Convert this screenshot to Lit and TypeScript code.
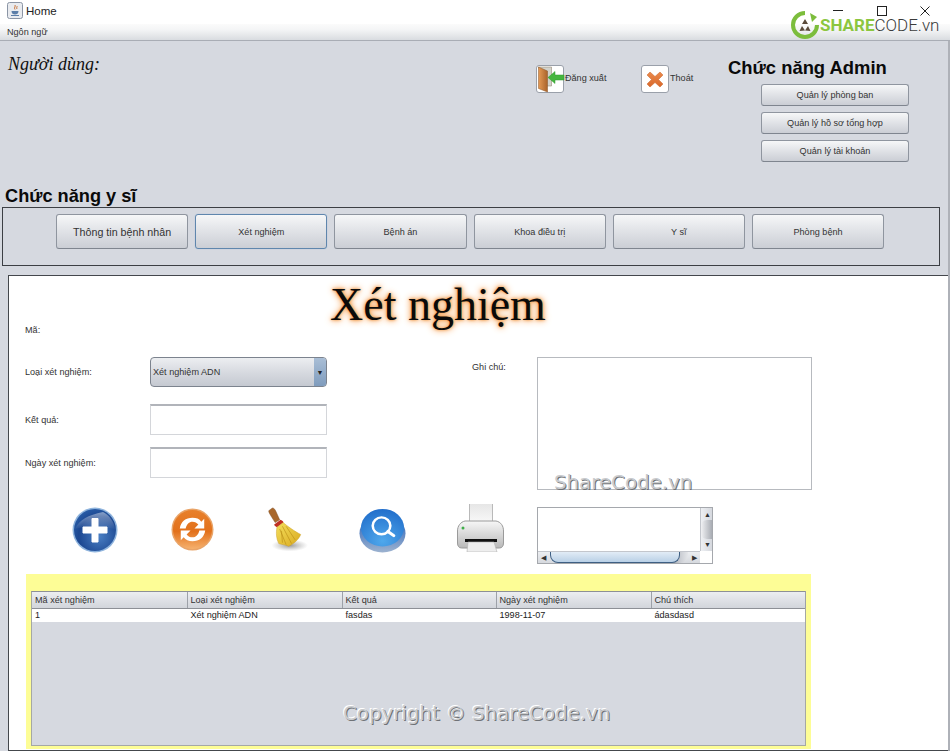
import { css, html, LitElement, svg } from "lit";
import { customElement } from "lit/decorators.js";

const doctorTabs = ["Thông tin bệnh nhân", "Xét nghiệm", "Bệnh án", "Khoa điều trị", "Y sĩ", "Phòng bệnh"];
const adminButtons = ["Quản lý phòng ban", "Quản lý hồ sơ tổng hợp", "Quản lý tài khoản"];
const columns = ["Mã xét nghiệm", "Loại xét nghiệm", "Kết quả", "Ngày xét nghiệm", "Chú thích"];
const rows = [["1", "Xét nghiệm ADN", "fasdas", "1998-11-07", "ádasdasd"]];

const javaIcon = svg`<svg width="16" height="17" viewBox="0 0 16 17">
  <rect x=".5" y=".5" width="15" height="16" rx="2" fill="#e9ebef" stroke="#8b95a5"/>
  <path d="M8 3c1 1.500-1.500 2.500 0 4.500M10 4c.5 1-1 1.500 0 3" fill="none" stroke="#c9743a"/>
  <path d="M4.500 9h7c0 2.500-1.500 3.500-3.500 3.500S4.500 11.500 4.500 9z" fill="#5c7ea8"/>
  <path d="M4 13.500h8" stroke="#5c7ea8"/>
</svg>`;

const doorIcon = svg`<svg width="28" height="26" viewBox="0 0 28 26">
  <defs><linearGradient id="door" x1="0" x2="1"><stop offset="0" stop-color="#e59a55"/><stop offset="1" stop-color="#a9632b"/></linearGradient></defs>
  <path d="M1.500 1h13v19H8z" fill="#d2d2cc" stroke="#8a7b63" stroke-width=".5"/>
  <path d="M1.500 1l9 4v21l-9-3.500z" fill="url(#door)" stroke="#8a5426" stroke-width=".5"/>
  <path d="M11 11.500l7-6v3.500h9v5h-9v3.500z" fill="#46b53f" stroke="#2f9a2c" stroke-width=".5"/>
</svg>`;

const exitIcon = svg`<svg width="26" height="26" viewBox="0 0 26 26">
  <defs><linearGradient id="cross" x1="0" y1="0" x2="0" y2="1"><stop offset="0" stop-color="#ea8a4c"/><stop offset="1" stop-color="#d9682b"/></linearGradient></defs>
  <path d="M5 9l3-3 5 4.500L18 6l3 3-4.500 4.500L21 18l-3 3-5-4.500L8 21l-3-3 4.500-4.500z" fill="url(#cross)" stroke="#c9642b" stroke-width=".5"/>
</svg>`;

const addIcon = svg`<svg width="46" height="46" viewBox="0 0 46 46">
  <defs>
    <radialGradient id="addFill" cx=".6" cy=".65" r=".75"><stop offset="0" stop-color="#4a7fc4"/><stop offset=".65" stop-color="#1c4791"/><stop offset="1" stop-color="#2b62ad"/></radialGradient>
    <linearGradient id="addGloss" x1="0" y1="0" x2="0" y2="1"><stop offset="0" stop-color="#fff" stop-opacity=".45"/><stop offset="1" stop-color="#fff" stop-opacity=".02"/></linearGradient>
  </defs>
  <circle cx="23" cy="23" r="22.500" fill="#8fb4dd"/>
  <circle cx="23" cy="23" r="21" fill="url(#addFill)"/>
  <path d="M3 22C7 13 16 8 31 5c6 3 11 9 12 17-10-2-28-4-40 0z" fill="url(#addGloss)"/>
  <path d="M20 11.500h6V20h9v6h-9v9h-6v-9h-9v-6h9z" fill="#fff" stroke="#fff" stroke-width="1" stroke-linejoin="round"/>
</svg>`;

const refreshIcon = svg`<svg width="43" height="43" viewBox="0 0 44 44">
  <defs><linearGradient id="refFill" x1="0" y1="0" x2="0" y2="1"><stop offset="0" stop-color="#e8802b"/><stop offset=".55" stop-color="#e2711c"/><stop offset="1" stop-color="#f6b16e"/></linearGradient></defs>
  <circle cx="22" cy="22" r="21.500" fill="#e9a468"/>
  <circle cx="22" cy="22" r="20" fill="url(#refFill)"/>
  <path d="M9 21c1-7 6-11 13-11 4 0 7 1 9 4l3-3v10H24l4-4c-1.500-2-3.500-3-6-3-3.500 0-6 2.500-7 7z" fill="#fff"/>
  <path d="M35 23c-1 7-6 11-13 11-4 0-7-1-9-4l-3 3V23h10l-4 4c1.500 2 3.500 3 6 3 3.500 0 6-2.500 7-7z" fill="#fff"/>
</svg>`;

const broomIcon = svg`<svg width="42" height="46" viewBox="0 0 46 50">
  <defs>
    <radialGradient id="broomShadow"><stop offset="0" stop-color="#777" stop-opacity=".75"/><stop offset="1" stop-color="#999" stop-opacity="0"/></radialGradient>
    <linearGradient id="straw" x1="0" y1="0" x2="1" y2="1"><stop offset="0" stop-color="#f4df5c"/><stop offset="1" stop-color="#d9a91f"/></linearGradient>
  </defs>
  <ellipse cx="26" cy="43" rx="20" ry="6.500" fill="url(#broomShadow)"/>
  <path d="M3 5l4-3c2 0 3 2 4 4l4 9-5 3-5-8C4 8 3 7 3 5z" fill="#a9682c" stroke="#7a4a1f" stroke-width=".5"/>
  <path d="M9 20l7-5c2 1 3 2 3 3l-7 5c-2-1-3-2-3-3z" fill="#bf2f22"/>
  <path d="M12 23l7-5c3 3 13 10 19 13-2 5-6 9-13 13-4-2-9-2-11-3-3-6-3-12-2-18z" fill="url(#straw)" stroke="#c99c1c" stroke-width=".5"/>
  <path d="M15 25l7 17M18 22l10 19M22 22l10 15M17 27l1 13" stroke="#b98d16" stroke-width=".7" fill="none"/>
</svg>`;

const searchIcon = svg`<svg width="47" height="45" viewBox="0 0 48 48" preserveAspectRatio="none">
  <defs>
    <linearGradient id="sBase" x1="0" y1="0" x2="0" y2="1"><stop offset="0" stop-color="#1b57b4"/><stop offset="1" stop-color="#9db3d0"/></linearGradient>
    <radialGradient id="sTop" cx=".5" cy=".85" r=".9"><stop offset="0" stop-color="#4fa8ec"/><stop offset="1" stop-color="#1f6bc9"/></radialGradient>
  </defs>
  <ellipse cx="24" cy="27" rx="23.500" ry="20.500" fill="url(#sBase)"/>
  <ellipse cx="24" cy="21" rx="22" ry="20" fill="url(#sTop)"/>
  <circle cx="23" cy="19" r="9" fill="none" stroke="#fff" stroke-width="2.600"/>
  <path d="M29.500 25l6 4.500" stroke="#fff" stroke-width="3.200" stroke-linecap="round"/>
</svg>`;

const printerIcon = svg`<svg width="47" height="48" viewBox="0 0 47 48">
  <defs>
    <linearGradient id="pBody" x1="0" y1="0" x2="0" y2="1"><stop offset="0" stop-color="#f7f7f7"/><stop offset="1" stop-color="#b9b9b9"/></linearGradient>
    <linearGradient id="pPaper" x1="0" y1="0" x2="0" y2="1"><stop offset="0" stop-color="#e6e6e6"/><stop offset="1" stop-color="#f8f8f8"/></linearGradient>
  </defs>
  <path d="M12.500 0v18h23V0" fill="url(#pPaper)" stroke="#b9b9b9"/>
  <path d="M8 17h31c5 1 7.500 5 7.500 10v12c0 3-1.500 5-4 5h-38c-2.500 0-4-2-4-5V27c0-5 3-9 7.500-10z" fill="url(#pBody)" stroke="#9a9a9a"/>
  <circle cx="6" cy="24" r="1.500" fill="#3fae49"/>
  <path d="M8 35h32v3H8z" fill="#111"/>
  <path d="M11 38h26l3 10H10z" fill="#eeeeee" stroke="#b0b0b0" stroke-width=".6"/>
</svg>`;

const tools = [
  { icon: addIcon, width: 99, top: 3 },
  { icon: refreshIcon, width: 95, top: 4 },
  { icon: broomIcon, width: 93, top: 2 },
  { icon: searchIcon, width: 98, top: 4 },
  { icon: printerIcon, width: 80, top: 0 },
];

@customElement("app-root")
export class AppRoot extends LitElement {
  static override styles = css`
    :host {
      display: block;
      position: relative;
      width: 950px;
      height: 751px;
      overflow: hidden;
      background: #d6d9e0;
      font-family: "Liberation Sans", Arial, sans-serif;
      font-size: 9.100px;
      color: #333;
    }
    * {
      box-sizing: border-box;
    }
    .titlebar {
      height: 24px;
      background: #fff;
      display: flex;
      align-items: center;
      gap: 3px;
      padding: 0 7px 3px;
      font-size: 11.500px;
      color: #222;
    }
    .titlebar svg {
      display: block;
    }
    .winbtns {
      margin-left: auto;
      display: flex;
      align-items: center;
      gap: 33.500px;
      padding-right: 13px;
    }
    .menubar {
      height: 17px;
      padding: 3px 7px 0;
      background: linear-gradient(#fbfbfb, #f4f5f6 35%, #d9dce0);
      border-bottom: 1px solid #a9adb5;
      color: #333;
    }
    .content {
      height: 710px;
      border-right: 2px solid #aeb1b8;
    }
    .top {
      display: flex;
      height: 145px;
      padding-left: 8px;
    }
    .user {
      flex: none;
      width: 528px;
      padding-top: 13px;
      font: italic 18px "Liberation Serif", serif;
      color: #111;
    }
    .actions {
      flex: none;
      width: 192px;
      display: grid;
      grid-template-columns: 105px 87px;
      align-items: start;
      padding-top: 24px;
    }
    .action {
      display: flex;
      gap: 1px;
      align-items: center;
      height: 28px;
    }
    .action span {
      padding-bottom: 2px;
    }
    .icon-btn {
      width: 28px;
      height: 28px;
      padding: 0;
      border: 1px solid #9aa0aa;
      border-radius: 3px;
      background: #fff;
    }
    .icon-btn svg {
      display: block;
      overflow: visible;
    }
    .admin h2 {
      margin: 15px 0 5px;
      font-size: 18.400px;
      line-height: 23px;
      color: #0a0a0a;
      white-space: nowrap;
    }
    .admin-list {
      margin-left: 33px;
      display: grid;
      gap: 6px;
    }
    button {
      font-family: inherit;
      color: #333;
    }
    .btn {
      border: 1px solid #8f959f;
      border-bottom-color: #7f858f;
      border-radius: 3px;
      padding: 0;
      background: linear-gradient(#f6f7f8, #e2e4e8 45%, #cbced5);
    }
    .admin-list .btn {
      width: 148px;
      height: 22px;
      font-size: 9.100px;
    }
    h2.doctor {
      margin: 0 0 0 5px;
      height: 21px;
      font-size: 18.200px;
      line-height: 20px;
      color: #0a0a0a;
    }
    .tabs {
      margin: 0 8px 0 2px;
      height: 59px;
      border: 1px solid #3c3f44;
      display: flex;
      gap: 7px;
      padding: 6px 0 0 53px;
    }
    .tabs .btn {
      width: 132.200px;
      height: 35px;
      font-size: 9.100px;
    }
    .tabs .btn.big {
      font-size: 10.700px;
    }
    .tabs .btn.focus {
      border: 1.500px solid #5f86ad;
      box-shadow: 0 0 1px #8cb0d2;
    }
    .sheet {
      margin: 9px 0 0 8px;
      height: 476px;
      background: #fff;
      border: 1px solid #44474c;
      border-right: none;
      padding-left: 16px;
    }
    .title {
      height: 48px;
      padding: 6px 0 0 305px;
      font: 46px/46px "Liberation Serif", serif;
      color: #0a0a0a;
      white-space: nowrap;
      text-shadow: 0 0 3px #f08a2c, 0 0 6px #f5a55c, 0 0 8px #f9c796;
    }
    .code {
      height: 12px;
      line-height: 12px;
      margin-bottom: 21px;
    }
    .form {
      display: flex;
      align-items: flex-start;
    }
    .fields {
      flex: none;
      width: 302px;
    }
    .field {
      display: grid;
      grid-template-columns: 125px 177px;
      align-items: center;
    }
    .field.result {
      margin-top: 17px;
    }
    .field.date {
      margin-top: 12px;
    }
    .combo {
      height: 30px;
      border: 1px solid #7c838e;
      border-radius: 4px;
      background: linear-gradient(#eceef1, #d7dae0 50%, #c5c9d1);
      display: flex;
      align-items: center;
      padding-left: 2px;
      overflow: hidden;
    }
    .combo span {
      flex: 1;
    }
    .arrow {
      width: 12px;
      height: 100%;
      background: linear-gradient(#a9bed6, #7f9cbd);
      display: flex;
      align-items: center;
      justify-content: center;
      font-size: 7px;
      color: #222;
    }
    .input {
      height: 31px;
      background: #fff;
      border: 1px solid #d4d6da;
      border-top: 2px solid #b1b4ba;
    }
    .note-label {
      flex: none;
      width: 65px;
      margin-left: 145px;
      padding-top: 5px;
    }
    .note {
      flex: none;
      width: 275px;
      height: 133px;
      border: 1px solid #b7babf;
    }
    .tools {
      display: flex;
      align-items: flex-start;
      height: 70px;
      padding-left: 47px;
      margin-top: 14px;
    }
    .tool {
      flex: none;
    }
    .tool svg {
      display: block;
    }
    .mini {
      flex: none;
      margin-top: 3px;
      width: 176px;
      height: 57px;
      border: 1px solid #a5a8ad;
      display: grid;
      grid-template-columns: 1fr 12px;
      grid-template-rows: 1fr 12px;
    }
    .vbar {
      background: linear-gradient(90deg, #eef0f3, #d5d8de);
      position: relative;
      border-left: 1px solid #c3c6cc;
    }
    .vbar i {
      position: absolute;
      left: 0;
      right: 0;
      top: 12px;
      height: 19px;
      border-radius: 6px 0 0 6px;
      background: linear-gradient(90deg, #f0f1f3, #a9adb4);
    }
    .hbar {
      background: linear-gradient(#eceef1, #d6d9de);
      position: relative;
      border-top: 1px solid #c3c6cc;
    }
    .hbar::after {
      content: "";
      position: absolute;
      left: 130px;
      width: 20px;
      top: 0;
      bottom: 0;
      border-radius: 0 0 8px 0;
      background: linear-gradient(90deg, #8d9095, #c9ccd2 60%, #e4e6e9);
    }
    .hbar i {
      position: absolute;
      z-index: 1;
      left: 12px;
      width: 130px;
      top: 0;
      bottom: 0;
      border: 1px solid #3e5f83;
      border-top: none;
      border-radius: 0 0 8px 8px;
      background: linear-gradient(#e2ecf6, #b9d0e6);
    }
    .scroll-mark {
      position: absolute;
      font-size: 7px;
      line-height: 10px;
      color: #333;
    }
    .grid-wrap {
      margin-left: 1px;
      width: 785px;
      height: 175px;
      background: #fdfd96;
      padding: 17px 5px 0;
    }
    .table {
      height: 155px;
      background: #d6d9e0;
      border: 1px solid #a5a8a4;
      border-top-color: #8d9096;
    }
    .thead,
    .trow {
      display: grid;
      grid-template-columns: 155.500px 155px 154px 155px 154px;
    }
    .thead {
      height: 17px;
      background: linear-gradient(#eceef1, #d2d5db);
      border-bottom: 1px solid #8d9096;
      align-items: center;
    }
    .thead span {
      height: 100%;
      line-height: 16px;
      padding-left: 3px;
      border-right: 1px solid #9da1a8;
    }
    .trow {
      height: 13px;
      line-height: 13px;
      background: #fff;
      color: #222;
    }
    .trow span {
      padding-left: 3px;
    }
    .watermark {
      position: absolute;
      color: #c9cbce;
      font-family: "DejaVu Sans", sans-serif;
      font-size: 19.800px;
      white-space: nowrap;
      text-shadow: 1px 1px 0 #6f7276, -1px -1px 0 #fff;
    }
    .wm1 {
      left: 554px;
      top: 471px;
    }
    .wm2 {
      left: 343px;
      top: 702px;
    }
    .logo {
      position: absolute;
      left: 791px;
      top: 11px;
      display: flex;
      align-items: center;
      gap: 1px;
      font-family: Roboto, sans-serif;
      font-weight: 300;
      font-size: 17px;
      line-height: 28px;
      color: #3b3b3b;
    }
    .logo b {
      color: #8cc63f;
      font-weight: 700;
    }
    .logo svg {
      display: block;
    }
  `;

  override render() {
    return html`
      <div class="titlebar">
        ${javaIcon}
        <span>Home</span>
        <div class="winbtns">
          <svg width="10" height="10" viewBox="0 0 10 10"><path d="M0 4.500h10" stroke="#222"/></svg>
          <svg width="10" height="10" viewBox="0 0 10 10"><rect x=".5" y=".5" width="9" height="9" fill="none" stroke="#222"/></svg>
          <svg width="10" height="10" viewBox="0 0 10 10"><path d="M.5.500l9 9M9.500.500l-9 9" stroke="#222"/></svg>
        </div>
      </div>
      <div class="menubar">Ngôn ngữ</div>

      <div class="content">
        <div class="top">
          <div class="user">Người dùng:</div>
          <div class="actions">
            <div class="action"><button class="icon-btn">${doorIcon}</button><span>Đăng xuất</span></div>
            <div class="action"><button class="icon-btn">${exitIcon}</button><span>Thoát</span></div>
          </div>
          <div class="admin">
            <h2>Chức năng Admin</h2>
            <div class="admin-list">
              ${adminButtons.map((label) => html`<button class="btn">${label}</button>`)}
            </div>
          </div>
        </div>

        <h2 class="doctor">Chức năng y sĩ</h2>
        <div class="tabs">
          ${doctorTabs.map(
            (label, i) => html`<button class="btn ${i === 0 ? "big" : ""} ${i === 1 ? "focus" : ""}">${label}</button>`,
          )}
        </div>

        <div class="sheet">
          <div class="title">Xét nghiệm</div>
          <div class="code">Mã:</div>
          <div class="form">
            <div class="fields">
              <div class="field">
                <span>Loại xét nghiệm:</span>
                <div class="combo"><span>Xét nghiệm ADN</span><div class="arrow">▼</div></div>
              </div>
              <div class="field result">
                <span>Kết quả:</span>
                <div class="input"></div>
              </div>
              <div class="field date">
                <span>Ngày xét nghiệm:</span>
                <div class="input"></div>
              </div>
            </div>
            <div class="note-label">Ghi chú:</div>
            <div class="note"></div>
          </div>
          <div class="tools">
            ${tools.map((t) => html`<div class="tool" style="width:${t.width}px;padding-top:${t.top}px">${t.icon}</div>`)}
            <div class="mini">
              <div></div>
              <div class="vbar">
                <span class="scroll-mark" style="left:3px;top:2px">▲</span>
                <i></i>
                <span class="scroll-mark" style="left:3px;bottom:1px">▼</span>
              </div>
              <div class="hbar">
                <span class="scroll-mark" style="left:3px;top:1px">◀</span>
                <i></i>
                <span class="scroll-mark" style="right:3px;top:1px">▶</span>
              </div>
              <div></div>
            </div>
          </div>
          <div class="grid-wrap">
            <div class="table">
              <div class="thead">${columns.map((c) => html`<span>${c}</span>`)}</div>
              ${rows.map((r) => html`<div class="trow">${r.map((c) => html`<span>${c}</span>`)}</div>`)}
            </div>
          </div>
        </div>
      </div>

      <div class="watermark wm1">ShareCode.vn</div>
      <div class="watermark wm2">Copyright © ShareCode.vn</div>
      <div class="logo">
        <svg width="28" height="28" viewBox="0 0 28 28">
          <path d="M14 2a12 12 0 1 0 12 12" fill="none" stroke="#7cbd3c" stroke-width="4"/>
          <path d="M19 2l7 4-5 5z" fill="#7cbd3c"/>
          <path d="M14 8l3 5h-6zM8.500 20l2.500-5 3 4.500zM19.500 20l-5.500-.500 3-4.500z" fill="#5a4a3a"/>
        </svg>
        <span><b>SHARE</b>CODE.vn</span>
      </div>
    `;
  }
}
